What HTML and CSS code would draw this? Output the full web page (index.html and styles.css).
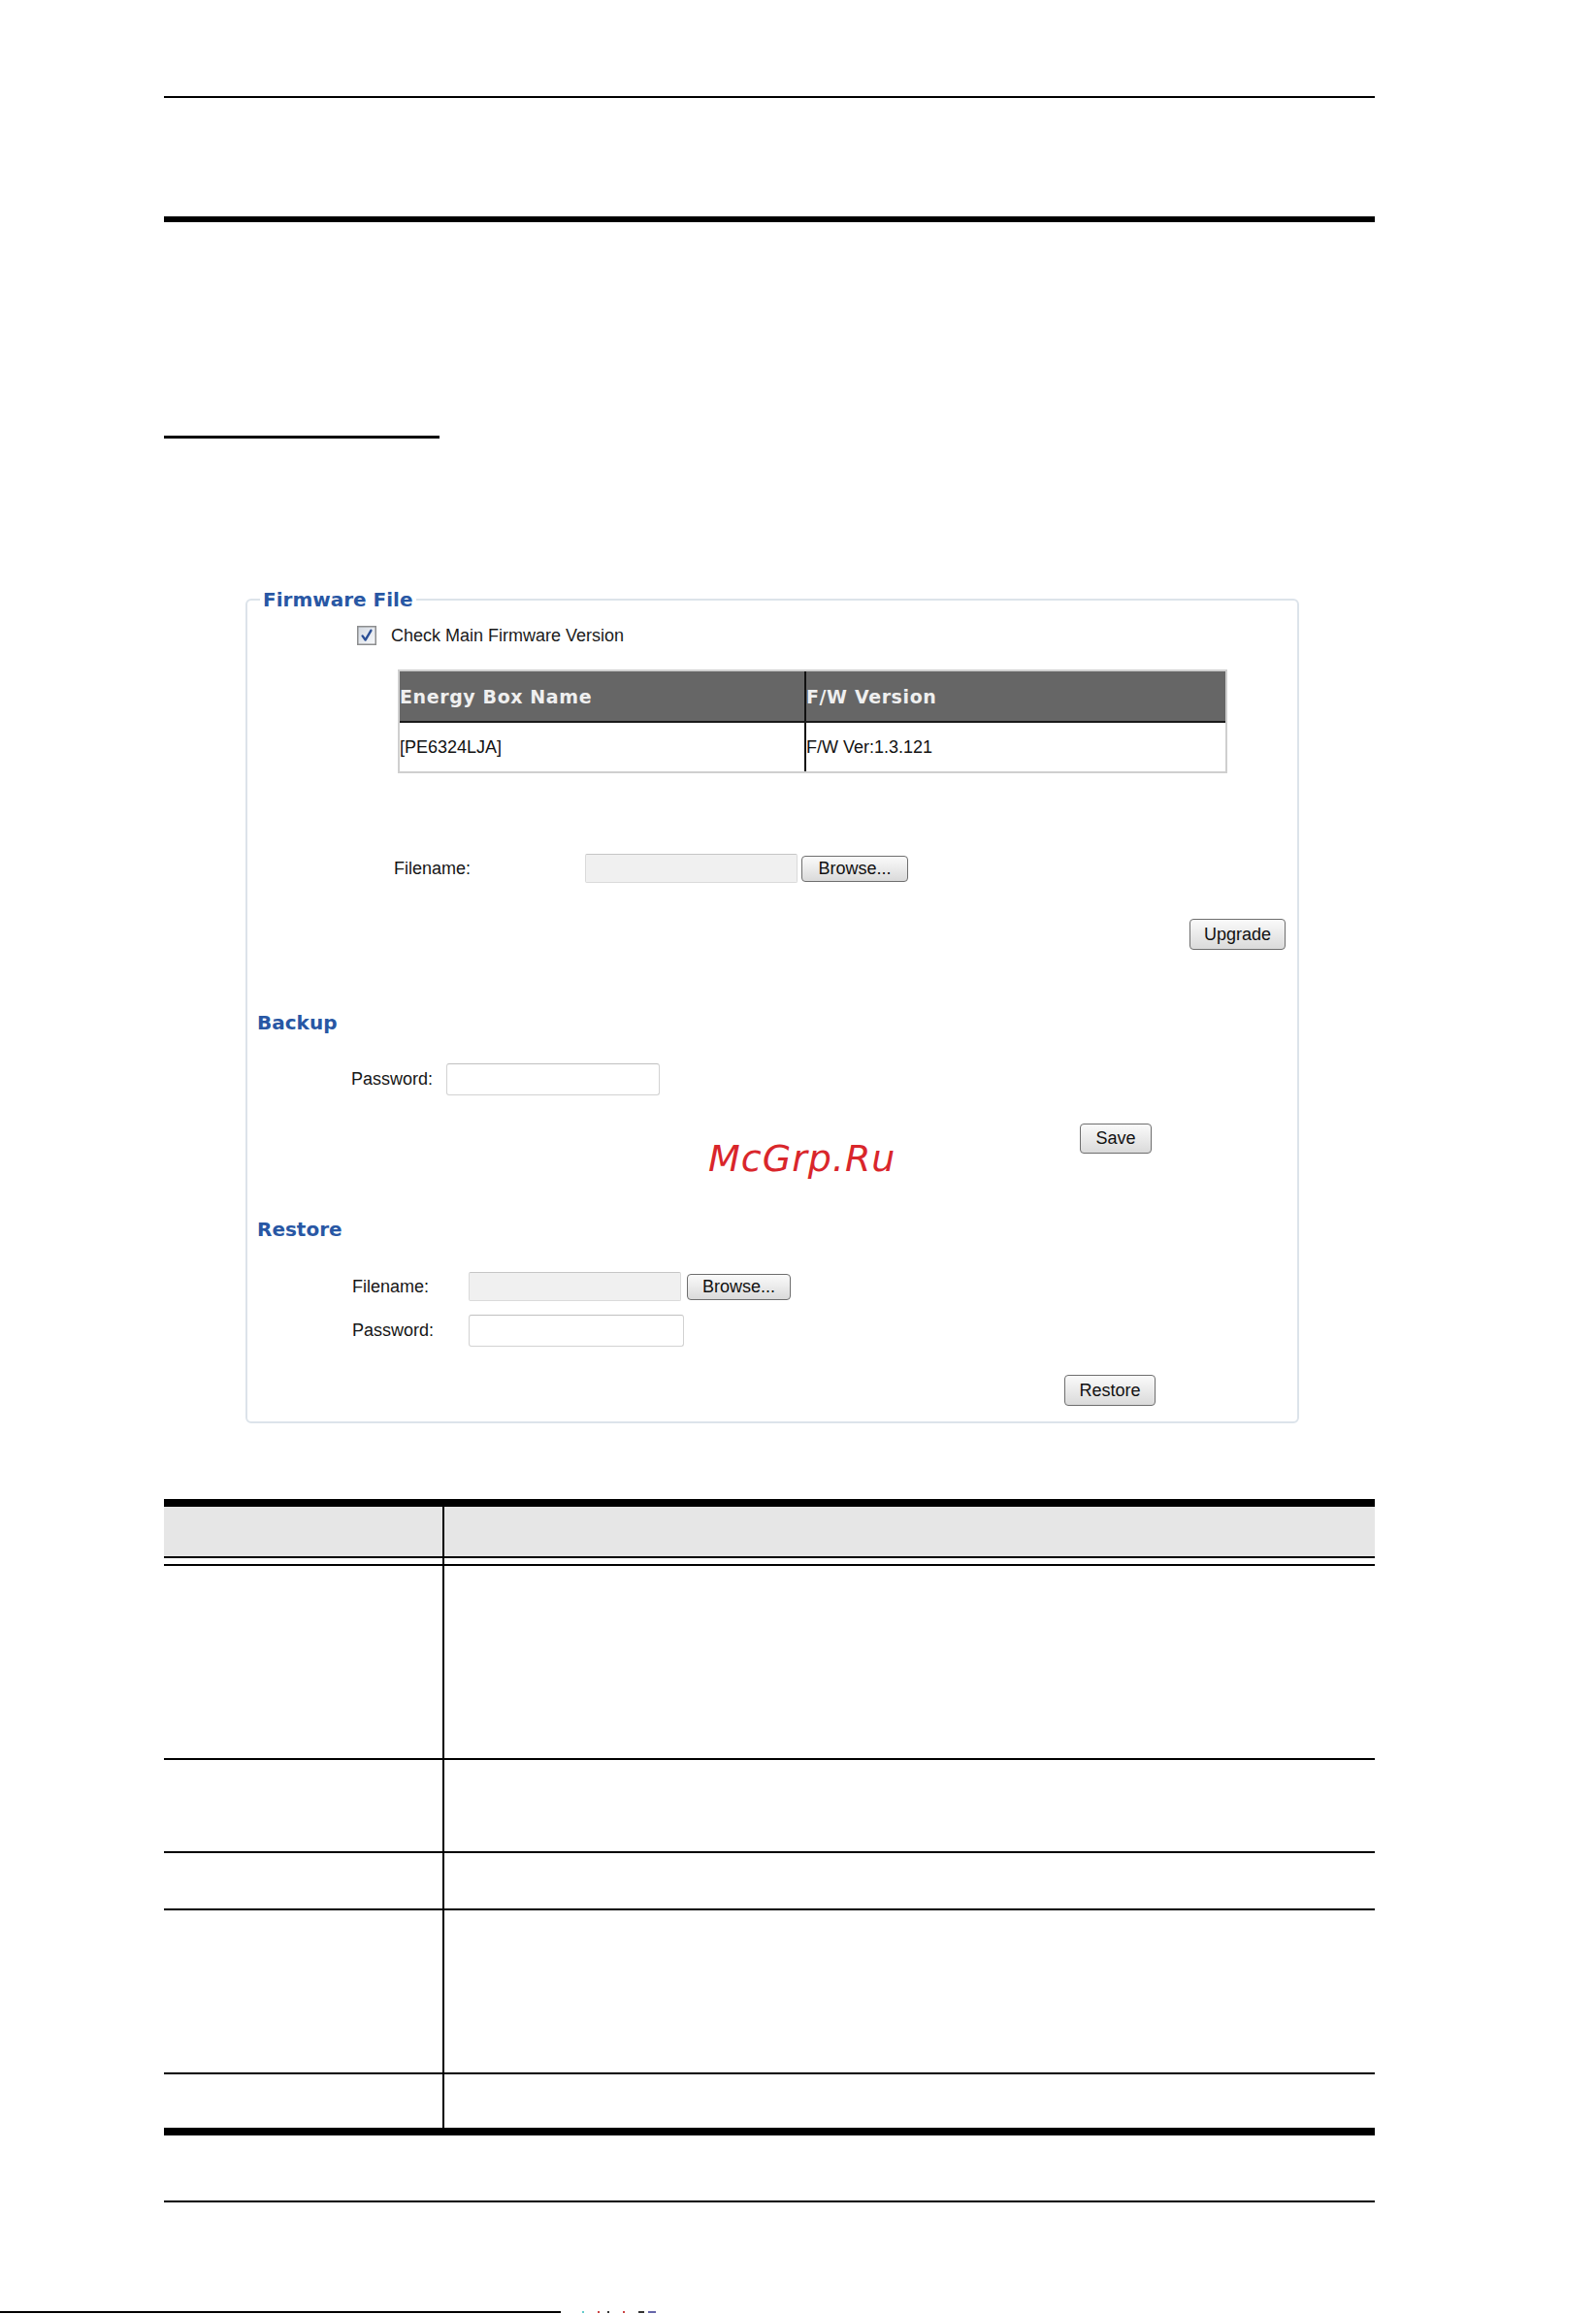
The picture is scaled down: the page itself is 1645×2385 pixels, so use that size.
FILE: index.html
```html
<!DOCTYPE html>
<html lang="en">
<head>
<meta charset="utf-8">
<title>Firmware File</title>
<link rel="stylesheet" href="styles.css">
</head>
<body>
<div class="page">
  <div class="rule-top"></div>
  <div class="rule-heavy"></div>
  <div class="sub-rule"></div>

  <fieldset class="panel">
    <legend>Firmware File</legend>

    <div class="check-row">
      <svg class="cbox" viewBox="0 0 20 20" width="20" height="20" aria-hidden="true">
        <defs>
          <linearGradient id="cg" x1="0" y1="0" x2="1" y2="1">
            <stop offset="0" stop-color="#d3d9e2"/>
            <stop offset="1" stop-color="#f8f9fb"/>
          </linearGradient>
        </defs>
        <rect x="0.75" y="0.75" width="18.5" height="18.5" fill="url(#cg)" stroke="#8c8d8e" stroke-width="1.5"/>
        <path d="M5.6 10.4 L8.6 14.6 L14.4 4.8" fill="none" stroke="#2b4f96" stroke-width="2.4" stroke-linecap="round" stroke-linejoin="round"/>
      </svg>
      <span>Check Main Firmware Version</span>
    </div>

    <div class="fw-table">
      <div class="fw-row fw-head">
        <div class="fw-cell">Energy Box Name</div>
        <div class="fw-cell">F/W Version</div>
      </div>
      <div class="fw-row fw-body">
        <div class="fw-cell">[PE6324LJA]</div>
        <div class="fw-cell">F/W Ver:1.3.121</div>
      </div>
    </div>

    <div class="form-row fw-file">
      <span class="lbl">Filename:</span>
      <input class="in-file" type="text" readonly>
      <button class="btn btn-browse" type="button">Browse...</button>
    </div>

    <div class="btn-row up-row">
      <button class="btn btn-upgrade" type="button">Upgrade</button>
    </div>

    <h3 class="sect sect-backup">Backup</h3>

    <div class="form-row bk-pass">
      <span class="lbl">Password:</span>
      <input class="in-pass" type="password">
    </div>

    <div class="btn-row save-row">
      <span class="watermark">McGrp.Ru</span>
      <button class="btn btn-save" type="button">Save</button>
    </div>

    <h3 class="sect sect-restore">Restore</h3>

    <div class="form-row rs-file">
      <span class="lbl">Filename:</span>
      <input class="in-file" type="text" readonly>
      <button class="btn btn-browse2" type="button">Browse...</button>
    </div>

    <div class="form-row rs-pass">
      <span class="lbl">Password:</span>
      <input class="in-pass in-pass2" type="password">
    </div>

    <div class="btn-row restore-row">
      <button class="btn btn-restore" type="button">Restore</button>
    </div>
  </fieldset>

  <div class="desc">
    <div class="desc-row desc-head"><div></div><div></div></div>
    <div class="desc-row desc-gap"><div></div><div></div></div>
    <div class="desc-row body r1"><div></div><div></div></div>
    <div class="desc-row body r2"><div></div><div></div></div>
    <div class="desc-row body r3"><div></div><div></div></div>
    <div class="desc-row body r4"><div></div><div></div></div>
    <div class="desc-row body r5"><div></div><div></div></div>
  </div>

  <div class="rule-footer"></div>
</div>

<div class="bottom-edge">
  <span class="edge-line"></span>
  <span class="speck s1"></span>
  <span class="speck s2"></span>
  <span class="speck s3"></span>
  <span class="speck s4"></span>
  <span class="speck s5"></span>
  <span class="speck s6"></span>
</div>
</body>
</html>
```

FILE: styles.css
```css
* { box-sizing: border-box; }

html, body {
  margin: 0;
  padding: 0;
  background: #ffffff;
}

body {
  width: 1645px;
  height: 2385px;
  overflow: hidden;
  font-family: "Liberation Sans", Arial, sans-serif;
  color: #111111;
}

.page {
  margin-left: 169px;
  width: 1248px;
  padding-top: 99px;
}

.rule-top {
  height: 2px;
  background: #000;
}

.rule-heavy {
  margin-top: 122px;
  height: 6px;
  background: #000;
}

.sub-rule {
  margin-top: 220px;
  width: 284px;
  height: 3px;
  background: #000;
}

/* ---------- firmware panel ---------- */
.panel {
  margin: 154px 0 0 84px;
  width: 1086px;
  min-inline-size: 0;
  padding: 0 0 16px 0;
  border: 2px solid #dce3ea;
  border-radius: 6px;
}

.panel legend {
  margin-left: 13px;
  padding: 0 3px;
  font: bold 20px/24px "DejaVu Sans", sans-serif;
  color: #2857a4;
}

.check-row {
  margin-top: 14px;
  padding-left: 113px;
  height: 22px;
  display: flex;
  align-items: center;
  gap: 15px;
  font-size: 18px;
  color: #1a1a1a;
}

.cbox {
  width: 20px;
  height: 20px;
  flex: none;
}

.fw-table {
  margin: 24px 0 0 155px;
  width: 855px;
  border: 2px solid #cfcfcf;
}

.fw-row {
  display: grid;
  grid-template-columns: 419px 1fr;
}

.fw-cell {
  display: flex;
  align-items: center;
  padding-left: 0;
  white-space: nowrap;
}

.fw-row .fw-cell:first-child {
  border-right: 2px solid #111;
}

.fw-head {
  height: 53px;
  background: #666666;
  border-bottom: 2px solid #1a1a1a;
}

.fw-head .fw-cell {
  font: bold 19px "DejaVu Sans", sans-serif;
  letter-spacing: 0.6px;
  color: #efefef;
}

.fw-body {
  height: 50px;
}

.fw-body .fw-cell {
  font-size: 18px;
  color: #111;
}

.form-row {
  display: flex;
  align-items: center;
  font-size: 18px;
  color: #151515;
}

.lbl {
  flex: none;
  white-space: nowrap;
}

.in-file {
  width: 219px;
  height: 30px;
  margin: 0;
  padding: 0;
  background: #f0f0f0;
  border: 1px solid #dadada;
  border-top-color: #c6c6c6;
  border-radius: 2px;
  font: inherit;
}

.in-pass {
  width: 220px;
  height: 33px;
  margin: 0;
  padding: 0;
  background: #ffffff;
  border: 1.5px solid #d2d2d2;
  border-top-color: #c0c0c0;
  border-radius: 3px;
  font: inherit;
}

.btn {
  margin: 0;
  padding: 0;
  display: flex;
  align-items: center;
  justify-content: center;
  font: 18px "Liberation Sans", Arial, sans-serif;
  color: #111;
  background: linear-gradient(#fafafa, #ececec 45%, #dadada);
  border: 1.5px solid #6e6e6e;
  border-radius: 4px;
}

.btn-row {
  display: flex;
  justify-content: flex-end;
}

/* firmware file row */
.fw-file {
  margin-top: 83px;
  height: 30px;
  padding-left: 151px;
}

.fw-file .lbl { width: 197px; }

.btn-browse {
  margin-left: 4px;
  width: 110px;
  height: 27px;
}

.up-row {
  margin-top: 37px;
  padding-right: 12px;
}

.btn-upgrade {
  width: 99px;
  height: 32px;
}

/* section headings */
.sect {
  margin: 0 0 0 10px;
  font: bold 20px/24px "DejaVu Sans", sans-serif;
  color: #2857a4;
}

.sect-backup { margin-top: 63px; }
.sect-restore { margin-top: 66px; }

/* backup */
.bk-pass {
  margin-top: 30px;
  padding-left: 107px;
}

.bk-pass .lbl { width: 98px; }

.save-row {
  position: relative;
  margin-top: 29px;
  padding-right: 150px;
}

.btn-save {
  width: 74px;
  height: 31px;
}

.watermark {
  position: absolute;
  left: 475px;
  top: 17px;
  font: oblique 38px/38px "DejaVu Sans", sans-serif;
  letter-spacing: 1px;
  color: #d9262b;
  white-space: nowrap;
}

/* restore */
.rs-file {
  margin-top: 32px;
  padding-left: 108px;
  height: 30px;
}

.rs-file .lbl,
.rs-pass .lbl { width: 120px; }

.btn-browse2 {
  margin-left: 6px;
  width: 107px;
  height: 27px;
}

.rs-pass {
  margin-top: 14px;
  padding-left: 108px;
}

.in-pass2 { width: 222px; }

.restore-row {
  margin-top: 29px;
  padding-right: 146px;
}

.btn-restore {
  width: 94px;
  height: 32px;
}

/* ---------- description table ---------- */
.desc {
  margin-top: 78px;
  border-top: 8px solid #000;
  border-bottom: 8px solid #000;
}

.desc-row {
  display: grid;
  grid-template-columns: 289px 1fr;
}

.desc-row > div:first-child {
  border-right: 2px solid #000;
}

.desc-head {
  height: 53px;
  background: #e6e6e6;
  border-bottom: 2px solid #000;
}

.desc-gap { height: 6px; }

.desc-row.body { border-top: 2px solid #000; }

.r1 { height: 200px; }
.r2 { height: 96px; }
.r3 { height: 59px; }
.r4 { height: 169px; }
.r5 { height: 57px; }

.rule-footer {
  margin-top: 67px;
  height: 2px;
  background: #000;
}

/* ---------- page bottom edge ---------- */
.bottom-edge {
  margin-top: 112px;
  height: 2px;
  display: flex;
  align-items: flex-start;
}

.edge-line {
  width: 578px;
  height: 2px;
  background: #000;
}

.speck {
  height: 2px;
  width: 2px;
  background: #333;
}

.s1 { margin-left: 22px; background: #6cc; }
.s2 { margin-left: 14px; background: #c44; }
.s3 { margin-left: 8px; }
.s4 { margin-left: 14px; background: #c44; }
.s5 { margin-left: 14px; width: 6px; }
.s6 { margin-left: 4px; width: 8px; background: #66a; }
```
